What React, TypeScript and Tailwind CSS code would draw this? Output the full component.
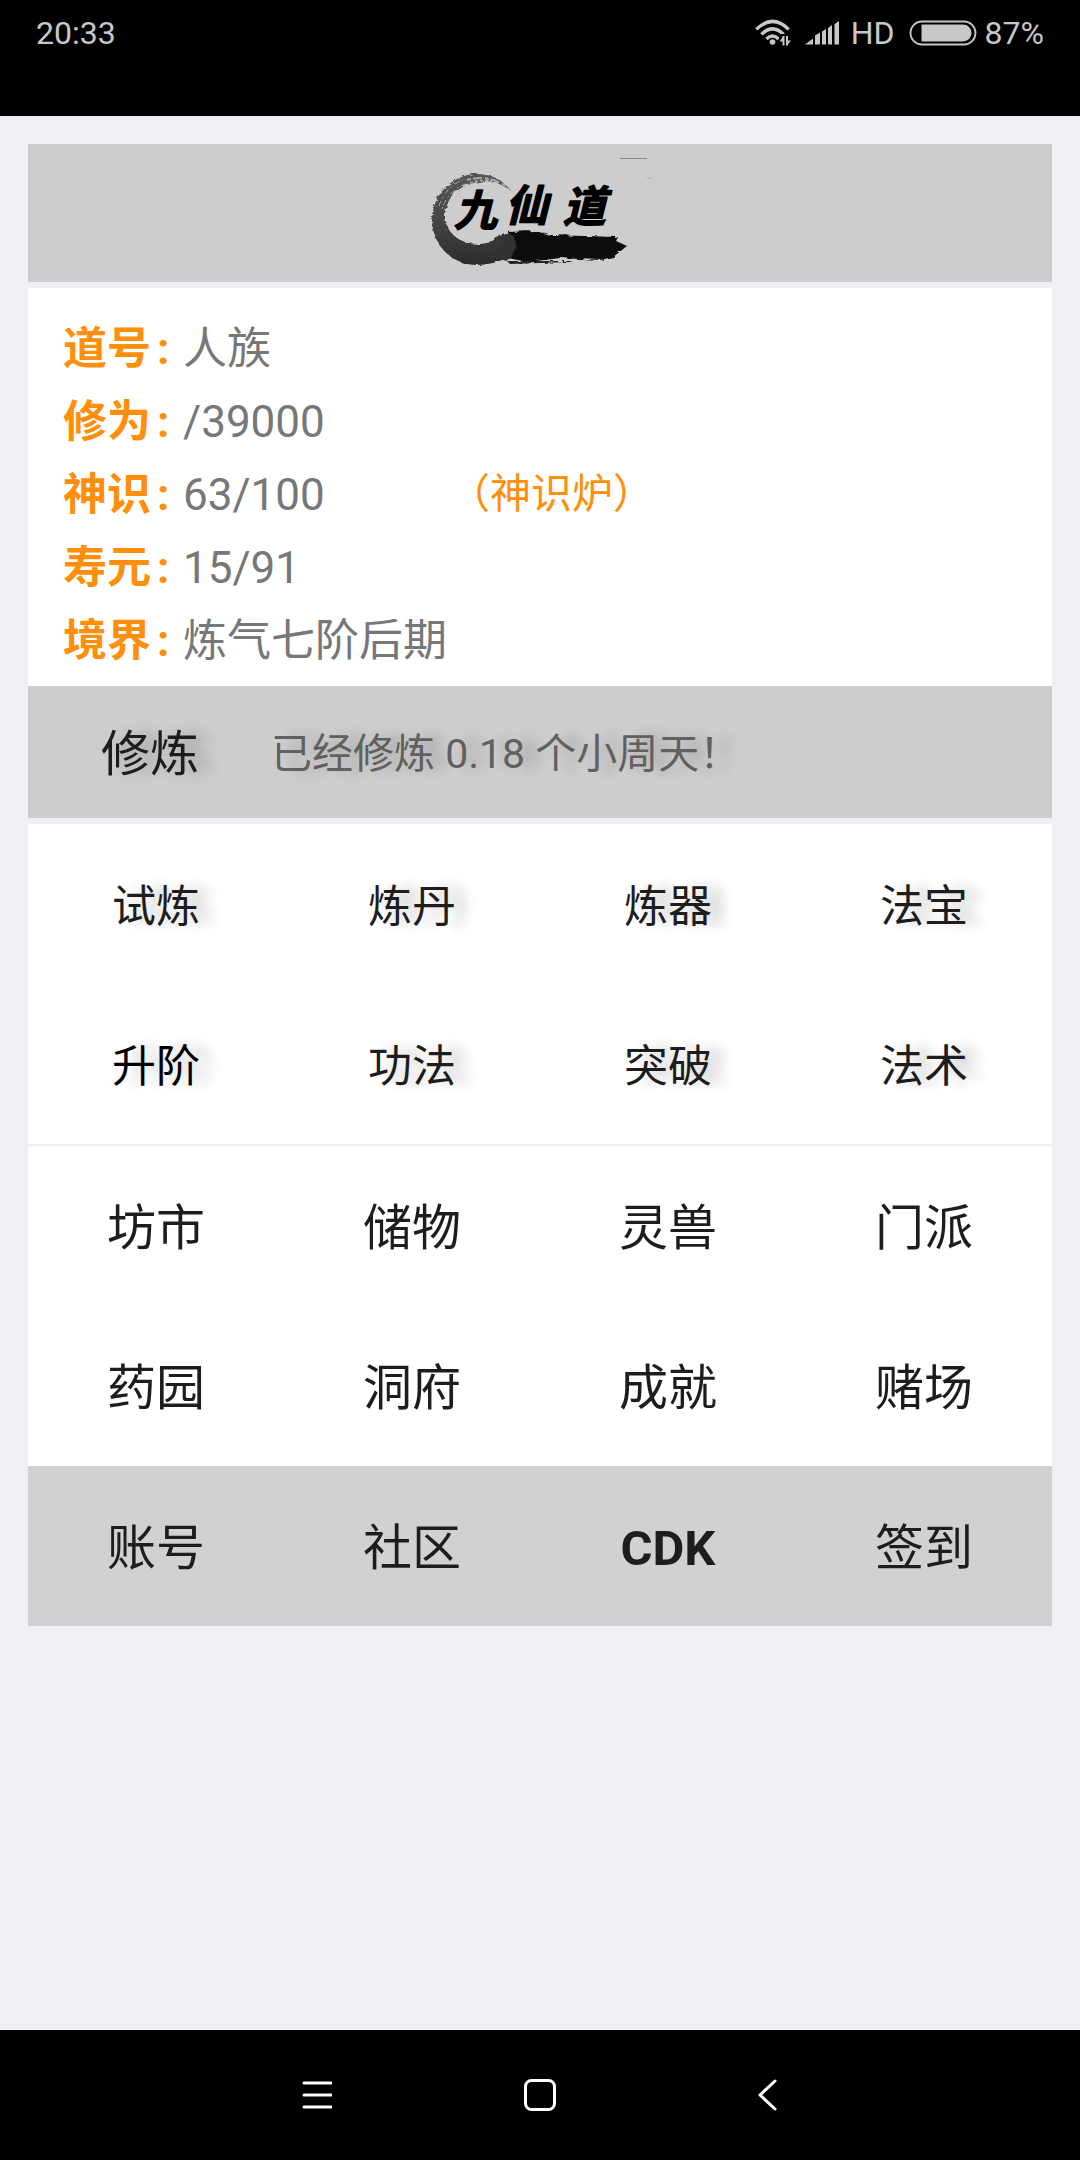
const STATS = [
  { label: '道号', value: '人族' },
  { label: '修为', value: '/39000' },
  { label: '神识', value: '63/100', link: '（神识炉）' },
  { label: '寿元', value: '15/91' },
  { label: '境界', value: '炼气七阶后期' },
]

const TRAINING = ['试炼', '炼丹', '炼器', '法宝', '升阶', '功法', '突破', '法术']
const PLACES = ['坊市', '储物', '灵兽', '门派', '药园', '洞府', '成就', '赌场']
const FOOTER = ['账号', '社区', 'CDK', '签到']

function StatusBar() {
  return (
    <header className="h-[116px] bg-black text-[32px] text-[#c8c8c8]">
      <div className="flex h-[66px] items-center justify-between px-9">
        <span>20:33</span>
        <div className="flex items-center">
          <svg width="36" height="28" viewBox="0 0 36 28" fill="none" stroke="currentColor" strokeWidth="3.4">
            <path d="M1.3 10.4Q17.5 -5.6 33.7 10.4" />
            <path d="M6.4 15.4Q17.5 4.4 28.6 15.4" />
            <path d="M11.4 20Q17.5 14 23.6 20" />
            <circle cx="17.5" cy="23" r="2.8" fill="currentColor" stroke="none" />
            <path d="M24 15h12v13H24z" fill="#000" stroke="none" />
            <path d="M28.5 17v9.5M32 17v9.5" strokeWidth="2" />
            <path d="M28.5 17L24.5 22.5h4zM32 26.5L36 21.5h-4z" fill="currentColor" stroke="none" />
          </svg>
          <svg className="ml-3.5" width="34" height="24" viewBox="0 0 34 24" fill="currentColor">
            <path d="M0 23.5L8 17.5v6zM10 14.5l5-3v12h-5zM17 10.5l4-2.500v15.500h-4zM23 7l4-3v19.500h-4zM29.500 3L34 0v23.500h-4.500z" />
          </svg>
          <span className="ml-3">HD</span>
          <svg className="ml-3.5" width="68" height="26" viewBox="0 0 68 26">
            <rect x="1.5" y="1.5" width="65" height="23" rx="11.5" fill="none" stroke="currentColor" strokeWidth="1.8" />
            <path d="M12.5 4.5H54a8.500 8.500 0 0 1 0 17H12.500z" fill="currentColor" />
          </svg>
          <span className="ml-2">87%</span>
        </div>
      </div>
    </header>
  )
}

function Logo() {
  return (
    <svg width="260" height="138" viewBox="0 4 260 138" role="img" aria-label="九仙道">
      <defs>
        <filter id="rough" x="-10%" y="-10%" width="120%" height="120%">
          <feTurbulence type="fractalNoise" baseFrequency="0.12 0.3" numOctaves="3" seed="4" result="noise" />
          <feDisplacementMap in="SourceGraphic" in2="noise" scale="5" />
        </filter>
        <linearGradient id="ink" x1="0" y1="0" x2="0" y2="1">
          <stop offset="0" stopColor="#555" />
          <stop offset="0.45" stopColor="#484848" />
          <stop offset="1" stopColor="#2b2b2b" />
        </linearGradient>
      </defs>
      <g filter="url(#rough)">
        {/* ring */}
        <path
          d="M101 51C92 38 78 33 63 34C40 37 23 55 22 79C22 106 43 125 67 125C78 125 88 122 97 118C104 115 107 108 107 101C106 93 99 91 93 94C86 99 80 104 68 104C50 104 36 93 35 77C35 60 46 48 61 44C75 39 90 41 101 51Z"
          fill="url(#ink)"
        />
        {/* tail stroke */}
        <path d="M97 92L125 91L140 95L208 97L206 101L217 106L203 117L190 120L150 118L118 122L98 118Q112 106 97 92Z" fill="#070b07" />
        <path d="M92 94Q104 90 106 103Q107 115 96 121L88 118Z" fill="#303030" />
        <path d="M97 121L162 121L160 122L100 124Z" fill="#222" />
      </g>
      {/* dry bristle marks over the thin end of the ring */}
      <g stroke="#cdcdcd" strokeWidth="1" fill="none" opacity="0.7">
        <path d="M29 66Q35 47 53 40" strokeDasharray="5 3 2 4" />
        <path d="M32 69Q38 50 58 43" strokeDasharray="2 2 6 3" />
        <path d="M57 40Q79 34 97 47" strokeDasharray="4 2 9 3" strokeWidth="2" />
        <path d="M60 43Q76 38 88 43" strokeDasharray="3 2" strokeWidth="2" />
      </g>
      <path d="M210 18.5H237" stroke="#8b8b80" />
      <path d="M237 37l5 2" stroke="#b0b0b0" />
      <g
        className="font-['Noto_Sans_CJK_SC',sans-serif] font-bold italic"
        fontSize="43"
        fill="#000"
        stroke="#000"
        strokeWidth="1.5"
        strokeLinejoin="round"
      >
        <text x="44" y="86">九</text>
        <text x="95" y="81">仙</text>
        <text x="153" y="82">道</text>
      </g>
    </svg>
  )
}

function NavBar() {
  return (
    <nav className="flex h-[130px] items-center justify-center bg-black text-white">
      <button aria-label="菜单" className="flex w-56 justify-center">
        <svg width="32" height="32" viewBox="0 0 32 32" stroke="currentColor" strokeWidth="3" strokeLinecap="round">
          <path d="M4 4h27M4 16h27M4 28h27" />
        </svg>
      </button>
      <button aria-label="主页" className="flex w-56 justify-center">
        <svg width="32" height="32" viewBox="0 0 32 32" fill="none" stroke="currentColor" strokeWidth="3">
          <rect x="1.5" y="1.5" width="29" height="29" rx="6" />
        </svg>
      </button>
      <button aria-label="返回" className="flex w-56 justify-center">
        <svg width="32" height="32" viewBox="0 0 32 32" fill="none" stroke="currentColor" strokeWidth="3" strokeLinecap="round" strokeLinejoin="round">
          <path d="M27 2L12 16l15 14" />
        </svg>
      </button>
    </nav>
  )
}

export default function App() {
  return (
    <div className="flex min-h-screen flex-col bg-[#efeff4] font-[Roboto,'Noto_Sans_CJK_SC',sans-serif]">
      <StatusBar />

      <main className="flex-1 p-7 text-[#1d1d1d]">
        <div className="flex justify-center bg-[#cdcdcd]">
          <Logo />
        </div>

        {/* Character stats */}
        <section className="mt-1.5 bg-white px-[35px] pt-6 pb-[9px]">
          {STATS.map((s) => (
            <div key={s.label} className="grid h-[73px] grid-cols-[120px_266px_1fr] items-center whitespace-nowrap text-[44px] text-[#777]">
              <span className="font-bold text-[#ff8f0a]">
                {s.label}
                <span className="ml-1.5">:</span>
              </span>
              <span>{s.value}</span>
              {s.link && <a href="#furnace" className="text-[41px] text-[#ff8f0a]">{s.link}</a>}
            </div>
          ))}
        </section>

        <section className="flex h-[132px] items-center bg-[#cdcdcd] pt-1.5 pl-[73px]">
          <button className="text-[49px] [text-shadow:15px_0_12px_#00000033]">修炼</button>
          <p className="ml-[72px] text-[41px] text-[#606060] [text-shadow:15px_0_12px_#00000033]">已经修炼 0.18 个小周天！</p>
        </section>

        {/* Training */}
        <section className="mt-1.5 grid grid-cols-4 border-b-2 border-[#efeff0] bg-white">
          {TRAINING.map((name) => (
            <button
              key={name}
              className={`h-40 pt-1.5 text-[44px] [text-shadow:15px_0_12px_#00000033] ${name === '升阶' ? 'text-black' : ''}`}
            >
              {name}
            </button>
          ))}
        </section>

        <section className="grid grid-cols-4 bg-white">
          {PLACES.map((name) => (
            <button key={name} className="h-40 pt-1.5 text-[49px]">{name}</button>
          ))}
        </section>

        <section className="grid grid-cols-4 bg-[#d1d1d1]">
          {FOOTER.map((name) => (
            <button key={name} className={`h-40 pt-1.5 text-[49px] ${name === 'CDK' ? 'font-bold' : ''}`}>{name}</button>
          ))}
        </section>
      </main>

      <NavBar />
    </div>
  )
}
